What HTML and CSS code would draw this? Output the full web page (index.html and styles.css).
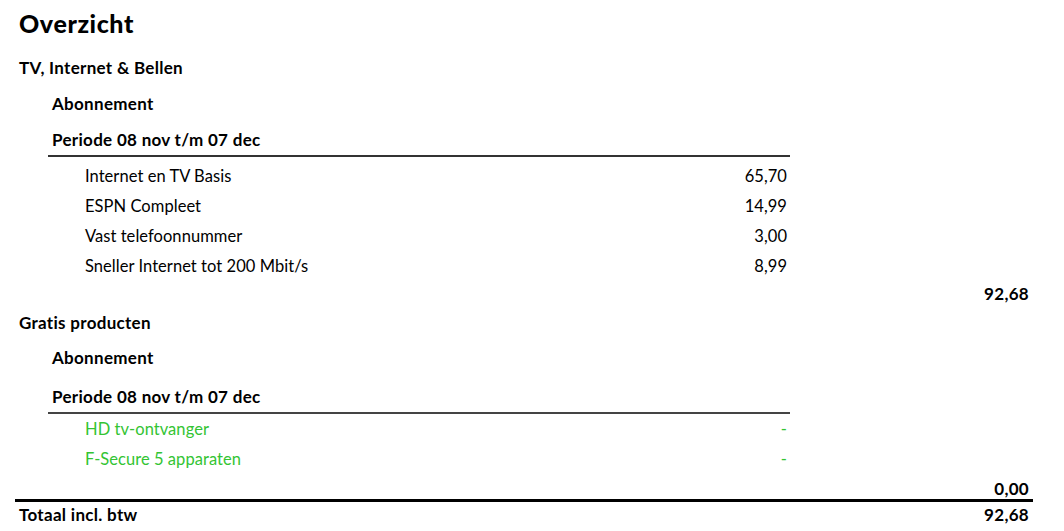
FILE: index.html
```html
<!DOCTYPE html>
<html lang="nl">
<head>
<meta charset="utf-8">
<title>Overzicht</title>
<link rel="stylesheet" href="styles.css">
</head>
<body>
<main class="page">
  <h1 class="title">Overzicht</h1>

  <section class="section">
    <h2 class="section-title">TV, Internet &amp; Bellen</h2>
    <div class="group">
      <h3 class="group-title">Abonnement</h3>
      <h4 class="period">Periode 08 nov t/m 07 dec</h4>
      <ul class="items">
        <li class="item"><span>Internet en TV Basis</span><span>65,70</span></li>
        <li class="item"><span>ESPN Compleet</span><span>14,99</span></li>
        <li class="item"><span>Vast telefoonnummer</span><span>3,00</span></li>
        <li class="item"><span>Sneller Internet tot 200 Mbit/s</span><span>8,99</span></li>
      </ul>
    </div>
    <div class="subtotal">92,68</div>
  </section>

  <section class="section section--free">
    <h2 class="section-title">Gratis producten</h2>
    <div class="group">
      <h3 class="group-title group-title--free">Abonnement</h3>
      <h4 class="period">Periode 08 nov t/m 07 dec</h4>
      <ul class="items items--free">
        <li class="item"><span>HD tv-ontvanger</span><span>-</span></li>
        <li class="item"><span>F-Secure 5 apparaten</span><span>-</span></li>
      </ul>
    </div>
    <div class="subtotal subtotal--last">0,00</div>
  </section>

  <div class="total">
    <span>Totaal incl. btw</span>
    <span>92,68</span>
  </div>
</main>
</body>
</html>
```

FILE: styles.css
```css
* { box-sizing: border-box; }

html, body {
  margin: 0;
  padding: 0;
  background: #fff;
}

body {
  font-family: Lato, "Liberation Sans", sans-serif;
  color: #000;
  font-size: 16px;
}

.page {
  padding: 8px 31px 0 15px;
}

.title {
  margin: 0;
  padding-left: 4px;
  font-size: 25px;
  line-height: 30px;
  font-weight: 900;
  letter-spacing: 0.6px;
}

.section-title,
.group-title,
.period,
.subtotal,
.total {
  font-size: 17px;
  font-weight: 700;
  letter-spacing: 0.3px;
}

.section-title {
  margin: 20px 0 0;
  padding-left: 4px;
  line-height: 20px;
}

.section--free .section-title {
  margin-top: 6px;
}

.group {
  margin-left: 33px;
  width: 742px;
}

.group-title {
  margin: 16px 0 0;
  padding-left: 4px;
  line-height: 20px;
}

.group-title--free {
  margin-top: 15px;
}

.period {
  margin: 16px 0 0;
  padding: 0 0 5px 4px;
  line-height: 20px;
  border-bottom: 2px solid #333;
}

.section--free .period {
  margin-top: 19px;
  border-bottom-color: #444;
}

.items {
  list-style: none;
  margin: 0;
  padding: 4px 3px 0 37px;
}

.items--free {
  padding-top: 0;
  color: #33c433;
}

.item {
  display: flex;
  justify-content: space-between;
  line-height: 30px;
  font-size: 16.5px;
  letter-spacing: 0.05px;
}

.subtotal {
  text-align: right;
  padding-right: 4px;
  line-height: 26px;
}

.subtotal--last {
  line-height: 20px;
  padding-top: 5px;
}

.total {
  display: flex;
  justify-content: space-between;
  border-top: 3px solid #000;
  padding: 0 4px;
  line-height: 26px;
}
```
